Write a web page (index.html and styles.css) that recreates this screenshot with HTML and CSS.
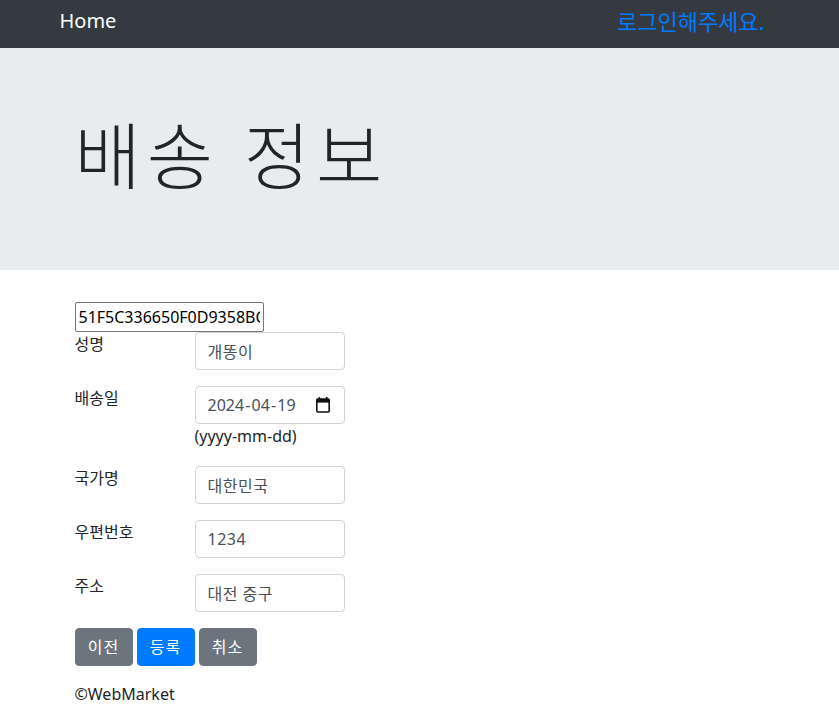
FILE: index.html
```
<!DOCTYPE html>
<html lang="ko">
<head>
    <meta charset="UTF-8">
    <meta name="viewport" content="width=device-width, initial-scale=1.0">
    <title>배송 정보</title>
    <link rel="stylesheet" href="styles.css">
</head>
<body>
    <nav class="navbar">
        <div class="container nav-inner">
            <a class="brand" href="#">Home</a>
            <span class="login-msg">로그인해주세요.</span>
        </div>
    </nav>

    <div class="jumbotron">
        <div class="container">
            <h1 class="display">배송 정보</h1>
        </div>
    </div>

    <div class="container">
        <form class="ship-form">
            <input type="text" class="cart-id" name="cartId" value="51F5C336650F0D9358BC5A2E7A17D0F3">

            <div class="form-row">
                <label class="col-label">성명</label>
                <div class="col-field">
                    <input type="text" class="form-control" name="name" value="개똥이">
                </div>
            </div>

            <div class="form-row">
                <label class="col-label">배송일</label>
                <div class="col-field">
                    <div class="date-box">
                        <input type="text" class="form-control date-input" name="shippingDate" value="2024 - 04 - 19">
                        <svg class="cal-icon" width="14" height="16" viewBox="0 0 14 16">
                            <rect x="2.5" y="0" width="1.6" height="3" fill="#111"/>
                            <rect x="9.9" y="0" width="1.6" height="3" fill="#111"/>
                            <rect x="0.8" y="2" width="12.4" height="13" rx="1" fill="none" stroke="#111" stroke-width="1.6"/>
                            <rect x="0.8" y="2" width="12.4" height="3.6" fill="#111"/>
                        </svg>
                    </div>
                    <div>(yyyy-mm-dd)</div>
                </div>
            </div>

            <div class="form-row">
                <label class="col-label">국가명</label>
                <div class="col-field">
                    <input type="text" class="form-control" name="country" value="대한민국">
                </div>
            </div>

            <div class="form-row">
                <label class="col-label">우편번호</label>
                <div class="col-field">
                    <input type="text" class="form-control" name="zipCode" value="1234">
                </div>
            </div>

            <div class="form-row">
                <label class="col-label">주소</label>
                <div class="col-field">
                    <input type="text" class="form-control" name="addressName" value="대전 중구">
                </div>
            </div>

            <div class="form-row buttons">
                <a href="#" class="btn btn-secondary">이전</a>
                <button type="submit" class="btn btn-primary">등록</button>
                <a href="#" class="btn btn-secondary">취소</a>
            </div>
        </form>
    </div>

    <footer class="container footer">
        <p>&copy;WebMarket</p>
    </footer>
</body>
</html>
```

FILE: styles.css
```
/* Base */
* {
    box-sizing: border-box;
}

body {
    margin: 0;
    font-family: "Noto Sans", "Noto Sans CJK KR", sans-serif;
    font-size: 16px;
    line-height: 1.5;
    color: #212529;
    background: #fff;
}

.container {
    width: 720px;
    margin: 0 auto;
    padding: 0 15px;
}

/* Navbar */
.navbar {
    background: #343a40;
    height: 48px;
}

.nav-inner {
    display: flex;
    justify-content: space-between;
    align-items: flex-start;
    padding: 6px 0 0;
}

.brand {
    color: #fff;
    font-size: 20px;
    line-height: 30px;
    text-decoration: none;
}

.login-msg {
    color: #007bff;
    font-size: 22px;
    line-height: 30px;
    margin-right: 15px;
}

/* Jumbotron */
.jumbotron {
    background: #e9ecef;
    padding: 64px 0;
    margin-bottom: 32px;
}

.display {
    margin: 0 0 8px;
    font-size: 72px;
    font-weight: 300;
    line-height: 1.2;
    letter-spacing: 6px;
}

/* Form */
.cart-id {
    display: block;
    width: 189px;
    height: 30px;
    font: inherit;
    color: #000;
    padding: 1px 3px;
    border: 1px solid #767676;
    border-radius: 2px;
}

.form-row {
    display: flex;
    margin-bottom: 16px;
}

.col-label {
    width: 120px;
}

.col-field {
    width: 150px;
}

.form-control {
    display: block;
    width: 100%;
    height: 38px;
    padding: 6px 12px;
    font: inherit;
    letter-spacing: 0.5px;
    color: #495057;
    background: #fff;
    border: 1px solid #ced4da;
    border-radius: 4px;
}

.date-box {
    position: relative;
}

.date-input {
    letter-spacing: 0;
    word-spacing: -3px;
}

.cal-icon {
    position: absolute;
    right: 15px;
    top: 11px;
}

.form-row:nth-of-type(2) {
    margin-bottom: 18px;
}

.buttons {
    gap: 4px;
}

.btn {
    display: inline-block;
    width: 58px;
    height: 38px;
    padding: 6px 0;
    font: inherit;
    letter-spacing: 1px;
    text-align: center;
    color: #fff;
    text-decoration: none;
    border: 1px solid transparent;
    border-radius: 4px;
    cursor: pointer;
}

.btn-secondary {
    background: #6c757d;
    border-color: #6c757d;
}

.btn-primary {
    background: #007bff;
    border-color: #007bff;
}

/* Footer */
.footer p {
    margin: 0 0 16px;
}
```
